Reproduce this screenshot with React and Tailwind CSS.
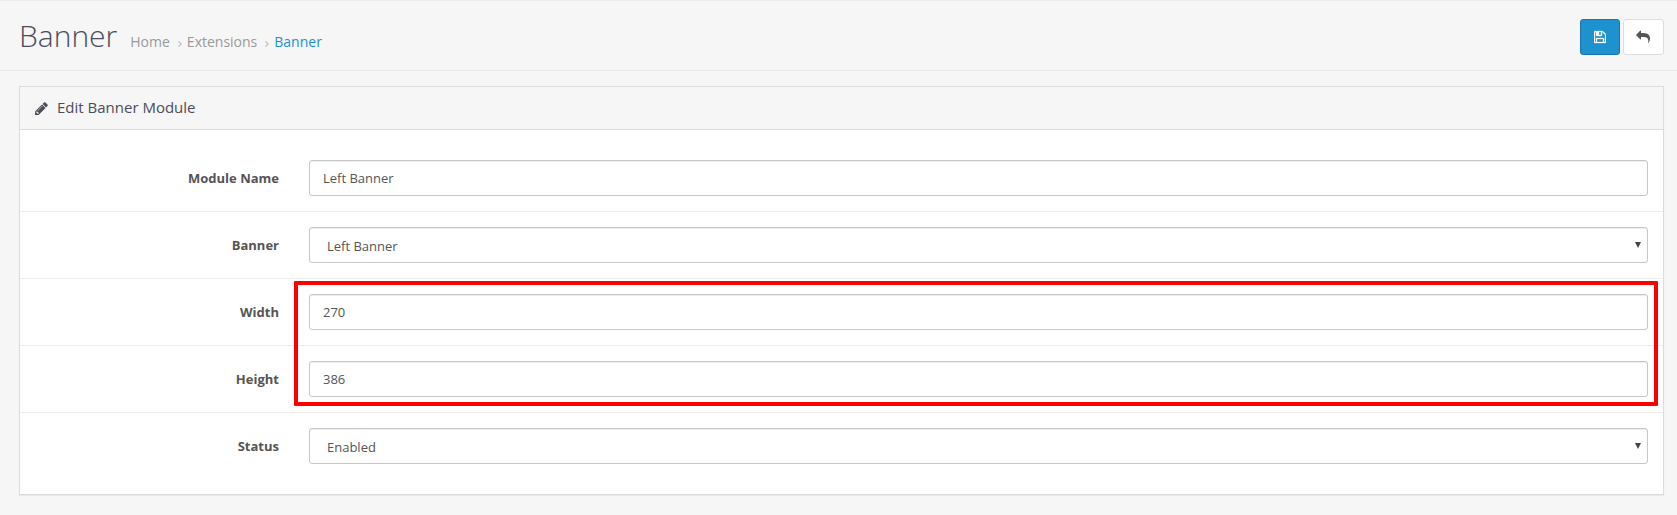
import React from "react";

function PencilIcon() {
  return (
    <svg viewBox="128 0 1536 1792" className="h-[15px] w-[13px]" fill="currentColor" aria-hidden="true">
      <path d="M491 1536l91-91-235-235-91 91v107h128v128h107zm523-928q0-22-22-22-10 0-17 7l-542 542q-7 7-7 17 0 22 22 22 10 0 17-7l542-542q7-7 7-17zm-54-192l416 416-832 832h-416v-416zm683 96q0 53-37 90l-166 166-416-416 166-165q36-38 90-38 53 0 91 38l235 234q37 39 37 91z" />
    </svg>
  );
}

function SaveIcon() {
  return (
    <svg viewBox="0 0 1536 1792" className="h-[14px] w-[12px]" fill="currentColor" stroke="currentColor" strokeWidth="40" aria-hidden="true">
      <path d="M384 1536h768v-384h-768v384zm896 0h128v-896q0-14-10-38.500t-20-34.500l-281-281q-10-10-34-20t-39-10v416q0 40-28 68t-68 28h-576q-40 0-68-28t-28-68v-416h-128v1280h128v-416q0-40 28-68t68-28h832q40 0 68 28t28 68v416zm-384-928v-320q0-13-9.500-22.500t-22.500-9.500h-192q-13 0-22.500 9.500t-9.500 22.500v320q0 13 9.500 22.500t22.500 9.500h192q13 0 22.500-9.500t9.500-22.500zm640 32v928q0 40-28 68t-68 28h-1344q-40 0-68-28t-28-68v-1344q0-40 28-68t68-28h928q40 0 88 20t76 48l280 280q28 28 48 76t20 88z" />
    </svg>
  );
}

function ReplyIcon() {
  return (
    <svg viewBox="0 0 1792 1792" className="h-[14px] w-[14px]" fill="currentColor" aria-hidden="true">
      <path d="M1792 1120q0 166-127 451-3 7-10.500 24t-13.500 30-13 22q-12 17-28 17-15 0-23.500-10t-8.500-25q0-9 2.500-26.500t2.500-23.500q5-68 5-123 0-101-17.500-181t-48.500-138.500-80-101-105.500-69.500-133-42.500-154-21.500-175.500-6h-224v256q0 26-19 45t-45 19-45-19l-512-512q-19-19-19-45t19-45l512-512q19-19 45-19t45 19 19 45v256h224q713 0 875 403 53 134 53 333z" />
    </svg>
  );
}

function Separator() {
  return (
    <svg viewBox="0 0 4 6" className="mr-[5px] ml-[8px] h-[6px] w-[4px]" fill="none" stroke="#bbb" strokeWidth="1.1" aria-hidden="true">
      <path d="M0.500 0.300L3.300 3L0.500 5.700" />
    </svg>
  );
}

const control =
  "block h-9 w-full appearance-none rounded-[3px] border border-[#c7c7c7] bg-white text-[13px] leading-[18px] text-[#555] shadow-[inset_0_1px_1px_rgba(0,0,0,0.075)] outline-none";

function TextField({ id, value }) {
  return <input id={id} type="text" defaultValue={value} className={`${control} px-[13px] pt-[8px] pb-[8px]`} />;
}

function SelectField({ id, value }) {
  return (
    <div className="relative">
      <select id={id} defaultValue={value} className={`${control} pt-[9px] pr-8 pb-[7px] pl-[17px]`}>
        <option>{value}</option>
      </select>
      <svg viewBox="0 0 6 6" className="pointer-events-none absolute top-[15px] right-[7px] h-[6px] w-[6px]" aria-hidden="true">
        <path d="M0 0h6L3 6z" fill="#444" />
      </svg>
    </div>
  );
}

const rows = [
  { id: "name", label: "Module Name", value: "Left Banner", Field: TextField },
  { id: "banner", label: "Banner", value: "Left Banner", Field: SelectField },
  { id: "width", label: "Width", value: "270", Field: TextField },
  { id: "height", label: "Height", value: "386", Field: TextField },
  { id: "status", label: "Status", value: "Enabled", Field: SelectField },
];

export default function App() {
  return (
    <div className="h-[515px] overflow-hidden border-t border-[#eee] bg-[#f6f6f6] font-['Open_Sans',sans-serif] text-[#555]">
      <header className="flex h-[70px] justify-between border-b border-[#e7e7e7] pr-[13px] pl-[19px]">
        <div className="flex items-baseline pt-[15px]">
          <h1 className="text-[30px] leading-[40px] font-light text-[#4c4d5a]">Banner</h1>
          <nav className="ml-[13px] flex items-baseline text-[14px] leading-5 text-[#999]">
            <a>Home</a>
            <Separator />
            <a>Extensions</a>
            <Separator />
            <a className="text-[#1e91cf]">Banner</a>
          </nav>
        </div>
        <div className="flex gap-[3px] pt-[18px]">
          <button className="flex h-9 w-10 items-center justify-center rounded-[3px] border border-[#1978ab] bg-[#1e91cf] text-white" aria-label="Save">
            <SaveIcon />
          </button>
          <button className="flex h-9 w-[41px] items-center justify-center rounded-[3px] border border-[#ddd] bg-white pr-px text-[#555]" aria-label="Cancel">
            <ReplyIcon />
          </button>
        </div>
      </header>

      <section className="mt-[15px] mr-[13px] ml-[19px] h-[409px] border border-[#dcdcdc] bg-white shadow-[0_1px_1px_rgba(0,0,0,0.05)]">
        <div className="flex h-[43px] items-center gap-[9px] border-b border-[#dcdcdc] bg-[#f6f6f6] pl-[15px] text-[#4c4d5a]">
          <PencilIcon />
          <h2 className="pb-[2px] text-[15px] leading-5">Edit Banner Module</h2>
        </div>
        <form className="relative pt-[15px]">
          {rows.map(({ id, label, value, Field }) => (
            <div key={id} className="flex h-[67px] items-start border-b border-[#ededed] pt-[15px] pr-[15px] last-of-type:border-b-0">
              <label htmlFor={id} className="w-[289px] shrink-0 pt-[9px] pr-[30px] text-right text-[13px] leading-[18px] font-bold">
                {label}
              </label>
              <div className="flex-1">
                <Field id={id} value={value} />
              </div>
            </div>
          ))}
          <span className="pointer-events-none absolute top-[151px] left-[274px] h-[125px] w-[1364px] rounded-[1px] border-4 border-[#f00]" />
        </form>
      </section>
    </div>
  );
}
